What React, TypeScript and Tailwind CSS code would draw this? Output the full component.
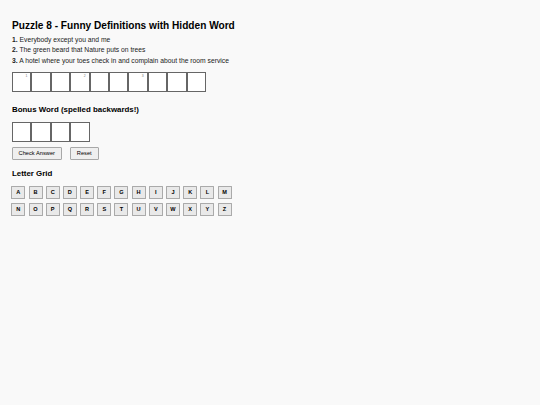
import React, { useState } from 'react';

const clues = [
  'Everybody except you and me',
  'The green beard that Nature puts on trees',
  'A hotel where your toes check in and complain about the room service',
];

// answer cells, with clue numbers on the first cell of each word
const labels: Record<number, string> = { 0: '1', 3: '2', 6: '3' };
const letters = 'ABCDEFGHIJKLMNOPQRSTUVWXYZ'.split('');

const Cell: React.FC<{ label?: string }> = ({ label }) => (
  <div className="relative w-[19.4px] h-[19.7px] bg-white border border-[#666]">
    {label && (
      <span className="absolute top-[1px] right-[3px] text-[3.4px] leading-[4px] text-[#777]">{label}</span>
    )}
  </div>
);

export default function App() {
  const [picked, setPicked] = useState<string[]>([]);

  return (
    <div className="min-h-[405px] bg-[#f9f9f9] text-[#222] px-[12px] pt-[20.2px] font-['Liberation_Sans',Arial,sans-serif]">
      <h2 className="text-[10.125px] leading-[12px] font-bold text-black">
        Puzzle 8 - Funny Definitions with Hidden Word
      </h2>

      <div className="mt-[2.6px] text-[6.75px] leading-[10.6px]">
        {clues.map((c, i) => (
          <p key={i}>
            <b>{i + 1}.</b> {c}
          </p>
        ))}
      </div>

      <div className="flex mt-[5.4px]">
        {Array.from({ length: 10 }).map((_, i) => (
          <Cell key={i} label={labels[i]} />
        ))}
      </div>

      <h3 className="mt-[13.3px] text-[7.9px] leading-[10px] font-bold text-black">
        Bonus Word (spelled backwards!)
      </h3>

      <div className="flex mt-[7px]">
        {Array.from({ length: 4 }).map((_, i) => (
          <Cell key={i} />
        ))}
      </div>

      <div className="flex gap-[8px] mt-[5.8px]">
        <button className="h-[12.8px] px-[5.6px] text-[5.7px] leading-none text-black bg-[#efefef] border border-[#a8a8a8] rounded-[1px]">
          Check Answer
        </button>
        <button
          onClick={() => setPicked([])}
          className="h-[12.8px] px-[6.3px] text-[5.7px] leading-none text-black bg-[#efefef] border border-[#a8a8a8] rounded-[1px]"
        >
          Reset
        </button>
      </div>

      <h3 className="mt-[8.6px] text-[7.9px] leading-[10px] font-bold text-black">Letter Grid</h3>

      <div className="grid grid-cols-[repeat(13,14px)] gap-x-[3.2px] gap-y-[4.3px] mt-[7.6px] -ml-[0.7px]">
        {letters.map((l) => (
          <button
            key={l}
            onClick={() => setPicked([...picked, l])}
            className="w-[14px] h-[12.7px] flex items-center justify-center text-[5.6px] leading-none font-bold text-black bg-[#e9e9e9] border border-[#aaa] rounded-[0.5px]"
          >
            {l}
          </button>
        ))}
      </div>
    </div>
  );
}
